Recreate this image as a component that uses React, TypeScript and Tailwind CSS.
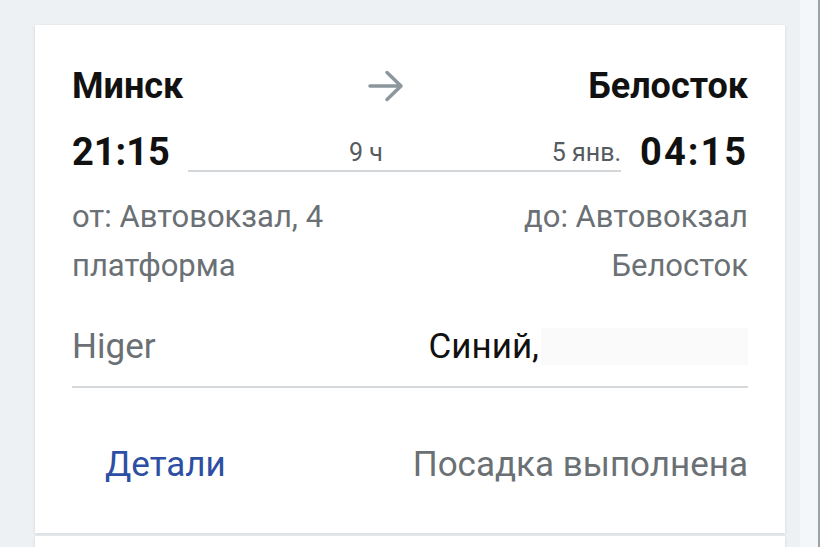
const font = { fontFamily: "Roboto, 'Liberation Sans', sans-serif" };

function Arrow() {
  return (
    <svg width="38" height="32" viewBox="0 0 38 32" fill="none" stroke="#8c979d" strokeWidth="3.5" strokeLinecap="round" strokeLinejoin="round">
      <path d="M3 16h31M20 2.5l14 13.5-14 13.5" />
    </svg>
  );
}

export default function App() {
  return (
    <div className="flex h-[547px] w-[820px] overflow-hidden bg-[#edf1f4]" style={font}>
      <div className="flex w-[800px] flex-col pl-[35px] pr-[15px] pt-[25px]">
        <div className="flex h-[508px] shrink-0 flex-col bg-white px-[37px] pt-[41px] shadow-[0_1px_3px_rgba(0,0,0,0.12)]">
          <div className="flex h-[40px] items-center justify-between">
            <span className="text-[36px] font-bold leading-none text-[#111]">Минск</span>
            <Arrow />
            <span className="text-[36px] font-bold leading-none text-[#111]">Белосток</span>
          </div>
          <div className="mt-[26px] flex h-[40px] items-center">
            <span className="text-[38px] font-bold leading-none text-[#111]">21:15</span>
            <div className="ml-[18px] mr-[19px] flex h-[40px] flex-1 items-center border-b-2 border-[#d3d7d9] pt-[2px]">
              <span className="ml-[161px] text-[25px] leading-none text-[#555b5f]">9 ч</span>
              <span className="ml-auto text-[25px] leading-none text-[#555b5f]">5 янв.</span>
            </div>
            <span className="text-[38px] font-bold leading-none tracking-[2px] text-[#111]">04:15</span>
          </div>
          <div className="mt-[20px] flex justify-between text-[31px] leading-[49px] text-[#6a7074]">
            <div>
              от: Автовокзал, 4<br />платформа
            </div>
            <div className="text-right">
              до: Автовокзал<br />Белосток
            </div>
          </div>
          <div className="mt-[32px] border-b-2 border-[#d6d9db] pb-[16px]">
            <div className="flex h-[48px] items-center">
              <span className="text-[35px] leading-none text-[#6a7074]">Higer</span>
              <span className="ml-auto text-[35px] leading-none text-[#111]">Синий,</span>
              <span className="ml-[2px] h-[37px] w-[207px] bg-[#fafafa]" />
            </div>
          </div>
          <div className="mt-[52px] flex h-[48px] items-center justify-between">
            <span className="pl-[33px] text-[35px] leading-none text-[#2c4fa3]">Детали</span>
            <span className="text-[35px] leading-none text-[#6a7074]">Посадка выполнена</span>
          </div>
        </div>
        <div className="mt-[3px] h-[40px] shrink-0 bg-white shadow-[0_1px_3px_rgba(0,0,0,0.12)]" />
      </div>
      <div className="w-[20px] border-r-2 border-[#9aa3a8] bg-[#f4f7f9]" />
    </div>
  );
}
